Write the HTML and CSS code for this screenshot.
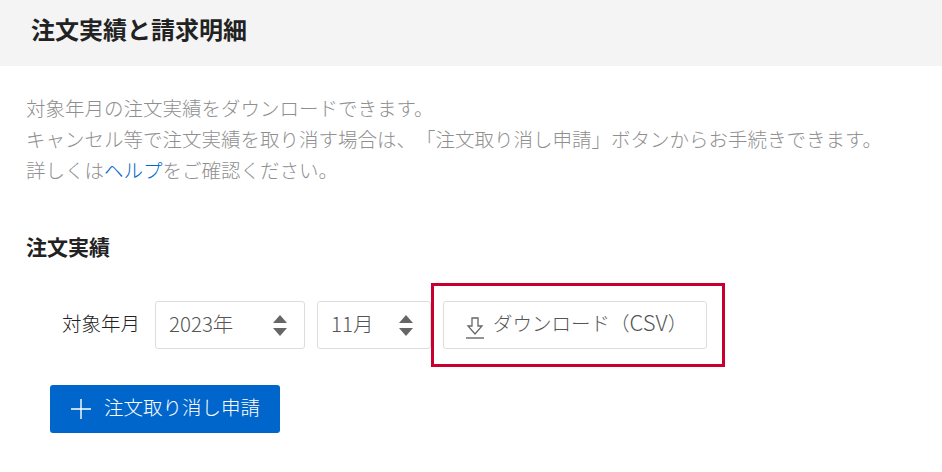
FILE: index.html
```html
<!DOCTYPE html>
<html lang="ja">
<head>
    <meta charset="UTF-8">
    <meta name="viewport" content="width=device-width, initial-scale=1.0">
    <title>注文実績と請求明細</title>
    <link rel="stylesheet" href="styles.css">
</head>
<body>

    <!-- Page title -->
    <header class="page-header">
        <h1 class="page-title">注文実績と請求明細</h1>
    </header>

    <main class="content">
        <p class="lead">
            対象年月の注文実績をダウンロードできます。<br>
            キャンセル等で注文実績を取り消す場合は、「注文取り消し申請」ボタンからお手続きできます。<br>
            詳しくは<a class="link" href="#">ヘルプ</a>をご確認ください。
        </p>

        <h2 class="section-title">注文実績</h2>

        <!-- Period selection and download -->
        <div class="filter-row">
            <span class="filter-label">対象年月</span>

            <div class="select-box select-year">
                <select class="select">
                    <option>2023年</option>
                </select>
                <svg class="select-arrows" width="14" height="21" viewBox="0 0 14 21">
                    <path d="M7 0 L14 8 H0 Z M0 13 H14 L7 21 Z" fill="#666"/>
                </svg>
            </div>

            <div class="select-box select-month">
                <select class="select">
                    <option>11月</option>
                </select>
                <svg class="select-arrows" width="14" height="21" viewBox="0 0 14 21">
                    <path d="M7 0 L14 8 H0 Z M0 13 H14 L7 21 Z" fill="#666"/>
                </svg>
            </div>

            <div class="download-wrap">
                <button class="btn-download" type="button">
                    <svg class="download-icon" width="18" height="22" viewBox="0 0 18 22">
                        <path d="M6 1 H12 V9 H16 L9 17 L2 9 H6 Z" fill="none" stroke="#666" stroke-width="1.3"/>
                        <path d="M0 21 H18" stroke="#666" stroke-width="1.4"/>
                    </svg>
                    <span>ダウンロード（<span class="latin">CSV</span>）</span>
                </button>
                <div class="highlight"></div>
            </div>
        </div>

        <button class="btn-primary" type="button">
            <svg class="plus-icon" width="20" height="20" viewBox="0 0 20 20">
                <path d="M10 0 V20 M0 10 H20" stroke="#fff" stroke-width="1.4"/>
            </svg>
            <span>注文取り消し申請</span>
        </button>
    </main>

</body>
</html>
```

FILE: styles.css
```css
* {
    box-sizing: border-box;
}

body {
    margin: 0;
    background: #fff;
    color: #222;
    font-family: "Noto Sans CJK JP", "Noto Sans", sans-serif;
    font-size: 19.5px;
    font-weight: 300;
    text-spacing-trim: space-all;
    overflow: hidden;
}

/* Title bar */
.page-header {
    display: flex;
    align-items: center;
    height: 66px;
    padding: 0 0 9px 31px;
    background: #f4f4f4;
}

.page-title {
    margin: 0;
    font-size: 24px;
    font-weight: 700;
    line-height: 1.4;
}

.content {
    padding: 26px 26px 0;
}

.lead {
    margin: 0;
    color: #8f8f8f;
    line-height: 31px;
    white-space: nowrap;
}

.link {
    color: #0066cc;
    text-decoration: none;
}

.section-title {
    margin: 46px 0 0;
    font-size: 21px;
    font-weight: 700;
    line-height: 30px;
}

/* Filter row */
.filter-row {
    display: flex;
    align-items: center;
    margin-top: 40px;
    padding-left: 36px;
}

.filter-label {
    width: 93px;
    padding-bottom: 5px;
}

.select-box {
    position: relative;
    height: 48px;
}

.select-year {
    width: 150px;
    margin-right: 12px;
}

.select-month {
    width: 114px;
    margin-right: 12px;
}

.select {
    width: 100%;
    height: 100%;
    padding: 0 0 5px 13px;
    border: 1px solid #ddd;
    border-radius: 3px;
    background: #fff;
    color: #555;
    font: inherit;
    font-size: 20.5px;
    appearance: none;
}

.select-arrows {
    position: absolute;
    top: 14px;
    right: 18px;
    pointer-events: none;
}

.download-wrap {
    position: relative;
}

.btn-download {
    display: flex;
    align-items: center;
    width: 264px;
    height: 48px;
    padding: 0 0 5px 22px;
    border: 1px solid #ddd;
    border-radius: 3px;
    background: #fff;
    color: #555;
    font: inherit;
}

.latin {
    font-size: 22px;
    line-height: 1;
}

.download-icon {
    margin: 10px 9px 0 0;
}

/* Red annotation frame around the download button */
.highlight {
    position: absolute;
    top: -18px;
    right: -18px;
    bottom: -18px;
    left: -12px;
    border: 3px solid #c8002f;
    pointer-events: none;
}

/* Blue button */
.btn-primary {
    display: flex;
    align-items: center;
    width: 230px;
    height: 48px;
    margin: 36px 0 0 24px;
    padding: 0 0 5px 21px;
    border: 0;
    border-radius: 3px;
    background: #0066cc;
    color: #fff;
    font: inherit;
}

.plus-icon {
    margin: 5px 13px 0 0;
}
```
